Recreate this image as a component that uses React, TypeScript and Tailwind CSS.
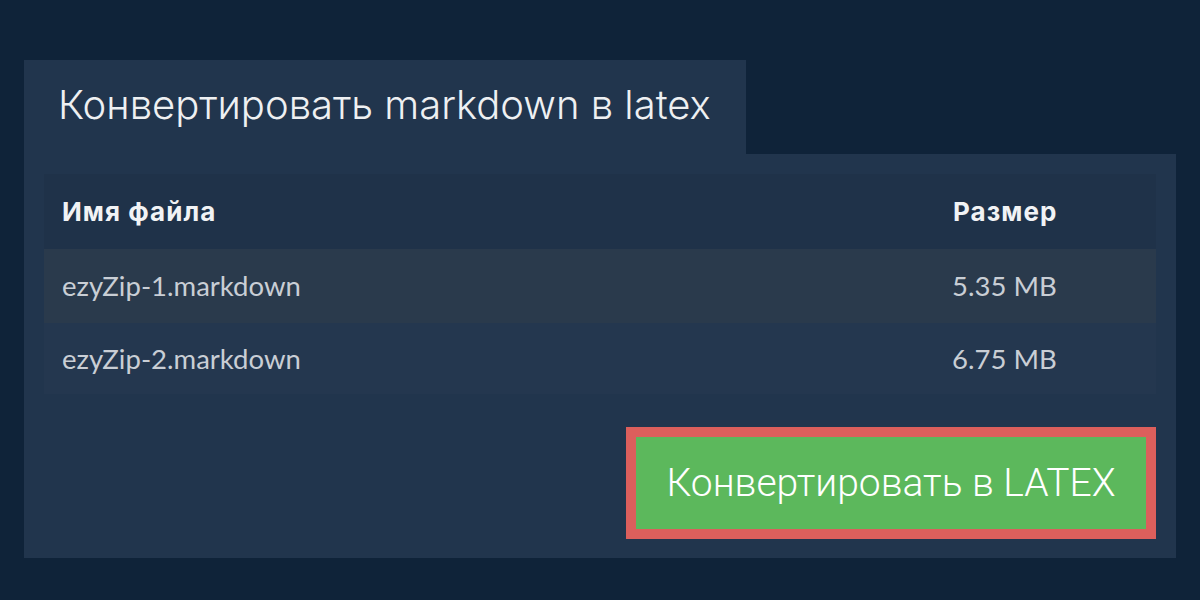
const files = [
  { name: "ezyZip-1.markdown", size: "5.35 MB", bg: "bg-[#2a3a4c]", h: "h-[74px]" },
  { name: "ezyZip-2.markdown", size: "6.75 MB", bg: "bg-[#24374f]", h: "h-[71px]" },
];

export default function App() {
  return (
    <div className="w-[1200px] h-[600px] bg-[#0f2339] pt-[60px] px-[24px]">
      {/* tab */}
      <div className="w-[722px] h-[94px] bg-[#21354d] flex items-center pl-[34px]">
        <h1
          className="text-[40px] font-light text-[#eef0f2] leading-none pb-[4px]"
          style={{ fontFamily: "Inter, 'Noto Sans', sans-serif" }}
        >
          Конвертировать markdown в latex
        </h1>
      </div>

      {/* panel */}
      <div className="bg-[#21354d] px-[20px] pt-[20px] pb-[19px]">
        <div className="flex flex-col">
          <div
            className="h-[75px] bg-[#1f3249] flex items-center px-[18px] text-[26px] font-bold tracking-[0.04em] text-[#f1f3f5]"
            style={{ fontFamily: "Inter, 'Noto Sans', sans-serif" }}
          >
            <span className="flex-1">Имя файла</span>
            <span className="w-[185px]">Размер</span>
          </div>
          {files.map((f) => (
            <div
              key={f.name}
              className={`${f.bg} ${f.h} flex items-center px-[18px] text-[27.5px] text-[#c9ced5]`}
              style={{ fontFamily: "Lato, 'Noto Sans', sans-serif" }}
            >
              <span className="flex-1">{f.name}</span>
              <span className="w-[186px]">{f.size}</span>
            </div>
          ))}
        </div>

        <div className="flex justify-end mt-[33px]">
          <button
            className="w-[530px] h-[112px] bg-[#5cb85c] border-[10px] border-[#dc5f5c] text-white text-[39px] font-light flex items-center justify-center"
            style={{ fontFamily: "Roboto, 'Noto Sans', sans-serif" }}
          >
            Конвертировать в LATEX
          </button>
        </div>
      </div>
    </div>
  );
}
